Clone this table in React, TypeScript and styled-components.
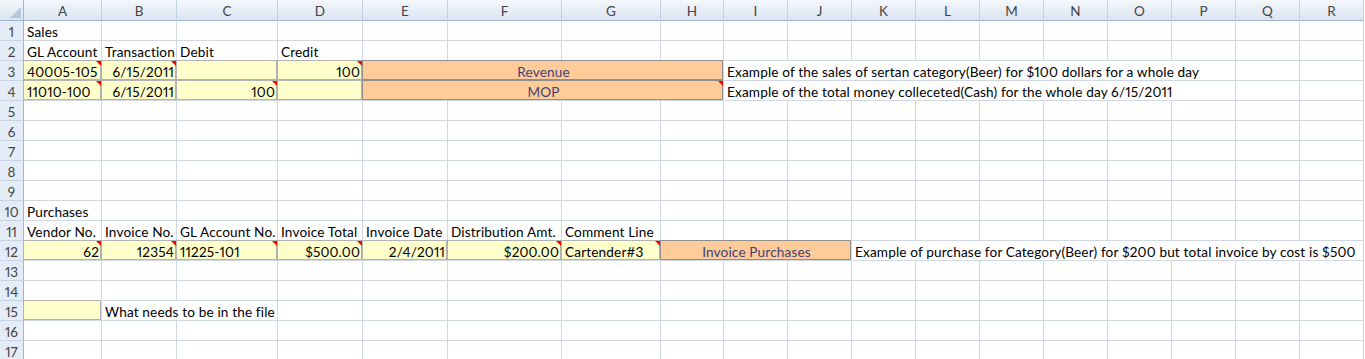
import React from "react";
import styled, { createGlobalStyle, css } from "styled-components";

const GlobalStyle = createGlobalStyle`
  html, body { margin: 0; padding: 0; background: #ffffff; }
  body { overflow: hidden; }
`;

const COL_WIDTHS = [78, 75, 101, 85, 85, 114, 99, 63, 64, 64, 64, 64, 64, 64, 64, 64, 64, 64];
const COL_NAMES = "ABCDEFGHIJKLMNOPQR".split("");

type Fill = "none" | "note" | "input";
type Align = "left" | "right" | "center";

interface CellSpec {
  col: number; // 0-based
  span?: number;
  text?: string;
  align?: Align;
  fill?: Fill;
  comment?: boolean;
}

const ROWS: CellSpec[][] = [
  [{ col: 0, text: "Sales" }],
  [
    { col: 0, text: "GL Account" },
    { col: 1, text: "Transaction" },
    { col: 2, text: "Debit" },
    { col: 3, text: "Credit" },
  ],
  [
    { col: 0, text: "40005-105", fill: "note", comment: true },
    { col: 1, text: "6/15/2011", align: "right", fill: "note", comment: true },
    { col: 2, fill: "note" },
    { col: 3, text: "100", align: "right", fill: "note", comment: true },
    { col: 4, span: 4, text: "Revenue", align: "center", fill: "input" },
    { col: 8, span: 8, text: "Example of the sales of sertan category(Beer) for $100 dollars for a whole day" },
  ],
  [
    { col: 0, text: "11010-100", fill: "note", comment: true },
    { col: 1, text: "6/15/2011", align: "right", fill: "note" },
    { col: 2, text: "100", align: "right", fill: "note", comment: true },
    { col: 3, fill: "note" },
    { col: 4, span: 4, text: "MOP", align: "center", fill: "input", comment: true },
    { col: 8, span: 8, text: "Example of the total money colleceted(Cash) for the whole day 6/15/2011" },
  ],
  [],
  [],
  [],
  [],
  [],
  [{ col: 0, text: "Purchases" }],
  [
    { col: 0, text: "Vendor No." },
    { col: 1, text: "Invoice No." },
    { col: 2, text: "GL Account No." },
    { col: 3, text: "Invoice Total" },
    { col: 4, text: "Invoice Date" },
    { col: 5, text: "Distribution Amt." },
    { col: 6, text: "Comment Line" },
  ],
  [
    { col: 0, text: "62", align: "right", fill: "note", comment: true },
    { col: 1, text: "12354", align: "right", fill: "note", comment: true },
    { col: 2, text: "11225-101", fill: "note", comment: true },
    { col: 3, text: "$500.00", align: "right", fill: "note", comment: true },
    { col: 4, text: "2/4/2011", align: "right", fill: "note" },
    { col: 5, text: "$200.00", align: "right", fill: "note", comment: true },
    { col: 6, text: "Cartender#3", fill: "note", comment: true },
    { col: 7, span: 3, text: "Invoice Purchases", align: "center", fill: "input" },
    { col: 10, span: 8, text: "Example of purchase for Category(Beer) for $200 but total invoice by cost is $500" },
  ],
  [],
  [],
  [{ col: 0, fill: "note" }, { col: 1, span: 2, text: "What needs to be in the file" }],
  [],
  [],
];

const Sheet = styled.div`
  display: grid;
  grid-template-columns: 24px ${COL_WIDTHS.map((w) => `${w}px`).join(" ")};
  grid-template-rows: 21px;
  grid-auto-rows: 20px;
  font-family: Lato, "Open Sans", "Liberation Sans", sans-serif;
  font-size: 13.6px;
  letter-spacing: 0.15px;
  font-variant-numeric: proportional-nums;
  color: #000000;
  width: 1365px;
  height: 359px;
  overflow: hidden;
  box-sizing: border-box;
`;

const Corner = styled.div`
  position: relative;
  box-sizing: border-box;
  background: linear-gradient(#f4f7fb, #dae4f1);
  border-right: 1px solid #9eb6ce;
  border-bottom: 1px solid #9eb6ce;
`;

const CornerMark = styled.svg`
  position: absolute;
  right: 2px;
  bottom: 2px;
`;

const ColHeader = styled.div`
  box-sizing: border-box;
  display: flex;
  align-items: center;
  justify-content: center;
  background: linear-gradient(#f5f8fc 0%, #e6edf7 55%, #dbe5f2 100%);
  border-right: 1px solid #c3d1e2;
  border-bottom: 1px solid #9eb6ce;
  color: #444444;
  font-size: 13.5px;
  letter-spacing: 0;
  padding-top: 2px;
`;

const RowHeader = styled.div`
  box-sizing: border-box;
  display: flex;
  align-items: center;
  justify-content: center;
  background: #e4ecf7;
  border-right: 1px solid #9eb6ce;
  border-bottom: 1px solid #c5d3e3;
  color: #444444;
  font-size: 13.5px;
  letter-spacing: 0;
  padding-top: 2px;
`;

const fillStyles: Record<Fill, ReturnType<typeof css>> = {
  none: css`
    background: transparent;
  `,
  note: css`
    background: #ffffcc;
    &::before {
      content: "";
      position: absolute;
      inset: -1px 0 0 -1px;
      border: 1px solid #b2b2b2;
      pointer-events: none;
    }
  `,
  input: css`
    background: #ffcc99;
    color: #3f3f76;
    &::before {
      content: "";
      position: absolute;
      inset: -1px 0 0 -1px;
      border: 1px solid #8f8f8f;
      pointer-events: none;
    }
  `,
};

const Cell = styled.div<{ $span: number; $align: Align; $fill: Fill }>`
  position: relative;
  box-sizing: border-box;
  grid-column: span ${(p) => p.$span};
  display: flex;
  align-items: flex-end;
  justify-content: ${(p) =>
    p.$align === "right" ? "flex-end" : p.$align === "center" ? "center" : "flex-start"};
  padding: 0 2px 0 3px;
  border-right: 1px solid #d0d7e5;
  border-bottom: 1px solid #d0d7e5;
  white-space: nowrap;
  line-height: 16px;
  ${(p) => fillStyles[p.$fill]}
`;

const CommentMark = styled.span`
  position: absolute;
  top: 0;
  right: 0;
  width: 0;
  height: 0;
  border-top: 5px solid #ff0000;
  border-left: 5px solid transparent;
  z-index: 2;
`;

function buildRow(specs: CellSpec[]): CellSpec[] {
  const out: CellSpec[] = [];
  let c = 0;
  const sorted = [...specs].sort((a, b) => a.col - b.col);
  for (const s of sorted) {
    while (c < s.col) {
      out.push({ col: c });
      c++;
    }
    out.push(s);
    c += s.span ?? 1;
  }
  while (c < COL_NAMES.length) {
    out.push({ col: c });
    c++;
  }
  return out;
}

export default function App() {
  return (
    <>
      <GlobalStyle />
      <Sheet>
        <Corner>
          <CornerMark width="11" height="11" viewBox="0 0 11 11">
            <polygon points="11,0 11,11 0,11" fill="#b6c6d9" />
          </CornerMark>
        </Corner>
        {COL_NAMES.map((n) => (
          <ColHeader key={n}>{n}</ColHeader>
        ))}
        {ROWS.map((row, ri) => (
          <React.Fragment key={ri}>
            <RowHeader>{ri + 1}</RowHeader>
            {buildRow(row).map((cell) => (
              <Cell
                key={cell.col}
                $span={cell.span ?? 1}
                $align={cell.align ?? "left"}
                $fill={cell.fill ?? "none"}
              >
                {cell.text}
                {cell.comment && <CommentMark />}
              </Cell>
            ))}
          </React.Fragment>
        ))}
      </Sheet>
    </>
  );
}
